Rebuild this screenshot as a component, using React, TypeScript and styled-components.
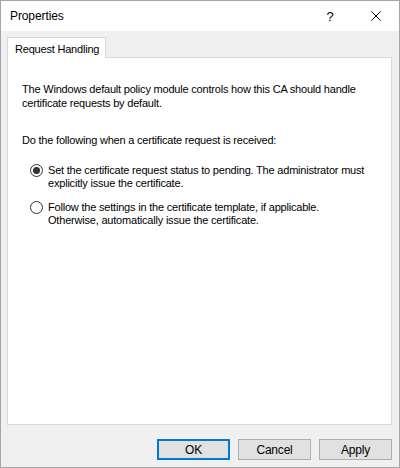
import styled, { createGlobalStyle } from "styled-components";

const GlobalStyle = createGlobalStyle`
  html, body {
    margin: 0;
    padding: 0;
    background: #ffffff;
  }
  body {
    font-family: "Liberation Sans", Arial, sans-serif;
    font-size: 11px;
    letter-spacing: -0.2px;
    color: #000000;
  }
`;

export default function App() {
  return (
    <>
      <GlobalStyle />
      <Window>
        <TitleBar>
          <Title>Properties</Title>
          <CaptionButton aria-label="Help">?</CaptionButton>
          <CaptionButton aria-label="Close">
            <svg width="10" height="10" viewBox="0 0 10 10">
              <path d="M0.5 0.5 L9.5 9.5 M9.5 0.5 L0.5 9.5" stroke="#000" strokeWidth="1" fill="none" />
            </svg>
          </CaptionButton>
        </TitleBar>
        <Body>
          <TabStrip>
            <Tab>Request Handling</Tab>
          </TabStrip>
          <Panel>
            <Para>
              The Windows default policy module controls how this CA should handle
              <br />
              certificate requests by default.
            </Para>
            <Para $gap={23}>Do the following when a certificate request is received:</Para>
            <RadioList>
              <RadioRow>
                <Radio $checked />
                <RadioLabel>
                  Set the certificate request status to pending. The administrator must
                  <br />
                  explicitly issue the certificate.
                </RadioLabel>
              </RadioRow>
              <RadioRow>
                <Radio />
                <RadioLabel>
                  Follow the settings in the certificate template, if applicable.
                  <br />
                  Otherwise, automatically issue the certificate.
                </RadioLabel>
              </RadioRow>
            </RadioList>
          </Panel>
          <Footer>
            <Button $default>OK</Button>
            <Button>Cancel</Button>
            <Button>Apply</Button>
          </Footer>
        </Body>
      </Window>
    </>
  );
}

// Style
const Window = styled.div`
  width: 400px;
  height: 468px;
  box-sizing: border-box;
  border: 1px solid #a6a6a6;
  background: #f0f0f0;
  display: flex;
  flex-direction: column;
`;

const TitleBar = styled.div`
  height: 30px;
  background: #ffffff;
  display: flex;
  align-items: center;
  padding-left: 9px;
`;

const Title = styled.div`
  flex: 1;
  font-size: 12px;
  letter-spacing: -0.1px;
  color: #000000;
`;

const CaptionButton = styled.div`
  width: 46px;
  height: 30px;
  display: flex;
  align-items: center;
  justify-content: center;
  font-size: 13px;
`;

const Body = styled.div`
  flex: 1;
  display: flex;
  flex-direction: column;
  padding: 6px 7px 7px 6px;
`;

const TabStrip = styled.div`
  display: flex;
  height: 20px;
  position: relative;
  z-index: 1;
`;

const Tab = styled.div`
  height: 21px;
  box-sizing: border-box;
  padding: 1px 6px 0 7px;
  display: flex;
  align-items: center;
  background: #ffffff;
  border: 1px solid #d9d9d9;
  border-bottom: none;
`;

const Panel = styled.div`
  flex: 1;
  background: #ffffff;
  border: 1px solid #d9d9d9;
  padding: 24px 14px 0 14px;
  white-space: nowrap;
`;

const Para = styled.p<{ $gap?: number }>`
  margin: ${(p) => p.$gap ?? 0}px 0 0 0;
  line-height: 14px;
`;

const RadioList = styled.div`
  display: flex;
  flex-direction: column;
  gap: 11px;
  margin-top: 17px;
  padding-left: 8px;
`;

const RadioRow = styled.div`
  display: flex;
  align-items: flex-start;
  gap: 5px;
`;

const Radio = styled.span<{ $checked?: boolean }>`
  width: 13px;
  height: 13px;
  box-sizing: border-box;
  border: 1px solid #333333;
  border-radius: 50%;
  background: #ffffff;
  display: flex;
  align-items: center;
  justify-content: center;
  flex-shrink: 0;
  &::after {
    content: "";
    width: 7px;
    height: 7px;
    border-radius: 50%;
    background: #333333;
    display: ${(p) => (p.$checked ? "block" : "none")};
  }
`;

const RadioLabel = styled.div`
  line-height: 13px;
`;

const Footer = styled.div`
  display: flex;
  justify-content: flex-end;
  gap: 8px;
  margin-top: 14px;
`;

const Button = styled.div<{ $default?: boolean }>`
  width: 73px;
  height: 21px;
  box-sizing: border-box;
  display: flex;
  align-items: center;
  justify-content: center;
  font-size: 12px;
  background: #e1e1e1;
  border: ${(p) => (p.$default ? "2px solid #0078d7" : "1px solid #adadad")};
`;
